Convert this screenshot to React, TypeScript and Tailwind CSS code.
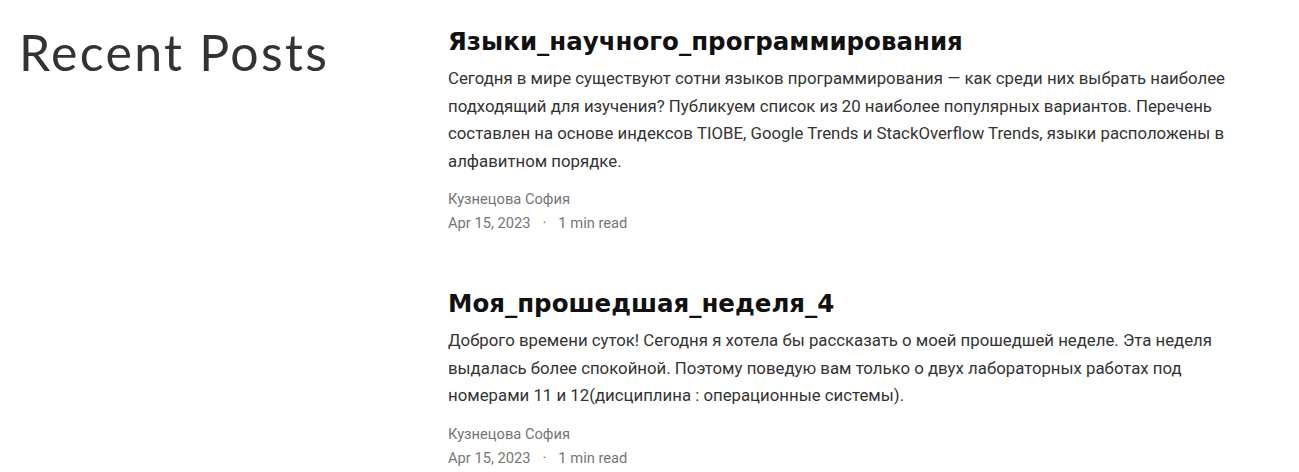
import React from "react";

const posts = [
  {
    title: "Языки_научного_программирования",
    excerpt:
      "Сегодня в мире существуют сотни языков программирования — как среди них выбрать наиболее подходящий для изучения? Публикуем список из 20 наиболее популярных вариантов. Перечень составлен на основе индексов TIOBE, Google Trends и StackOverflow Trends, языки расположены в алфавитном порядке.",
    author: "Кузнецова София",
    date: "Apr 15, 2023",
    read: "1 min read",
  },
  {
    title: "Моя_прошедшая_неделя_4",
    excerpt:
      "Доброго времени суток! Сегодня я хотела бы рассказать о моей прошедшей неделе. Эта неделя выдалась более спокойной. Поэтому поведую вам только о двух лабораторных работах под номерами 11 и 12(дисциплина : операционные системы).",
    author: "Кузнецова София",
    date: "Apr 15, 2023",
    read: "1 min read",
  },
];

export default function App() {
  return (
    <div className="min-h-screen bg-white flex">
      {/* Left column */}
      <div className="w-[448px] shrink-0 pl-[19px] pt-[24px]">
        <h2 className="font-['Lato',sans-serif] font-normal text-[50px] leading-[56px] tracking-[2.3px] text-[#333333]">
          Recent Posts
        </h2>
      </div>

      {/* Posts */}
      <div className="w-[792px] pt-[24px] flex flex-col gap-[51px]">
        {posts.map((p) => (
          <article key={p.title} className="flex flex-col">
            <h3 className="font-['DejaVu_Sans',sans-serif] font-bold text-[24.5px] leading-[36px] text-[#111111]">
              {p.title}
            </h3>
            <p className="mt-[5px] font-['Roboto',sans-serif] text-[16.8px] leading-[27.5px] text-[#333333]">
              {p.excerpt}
            </p>
            <div className="mt-[12px] font-['Roboto',sans-serif] text-[14.7px] leading-[24px] text-[#757575]">
              <div>{p.author}</div>
              <div className="flex items-center">
                <span>{p.date}</span>
                <span className="mx-[12px]">·</span>
                <span>{p.read}</span>
              </div>
            </div>
          </article>
        ))}
      </div>
    </div>
  );
}
